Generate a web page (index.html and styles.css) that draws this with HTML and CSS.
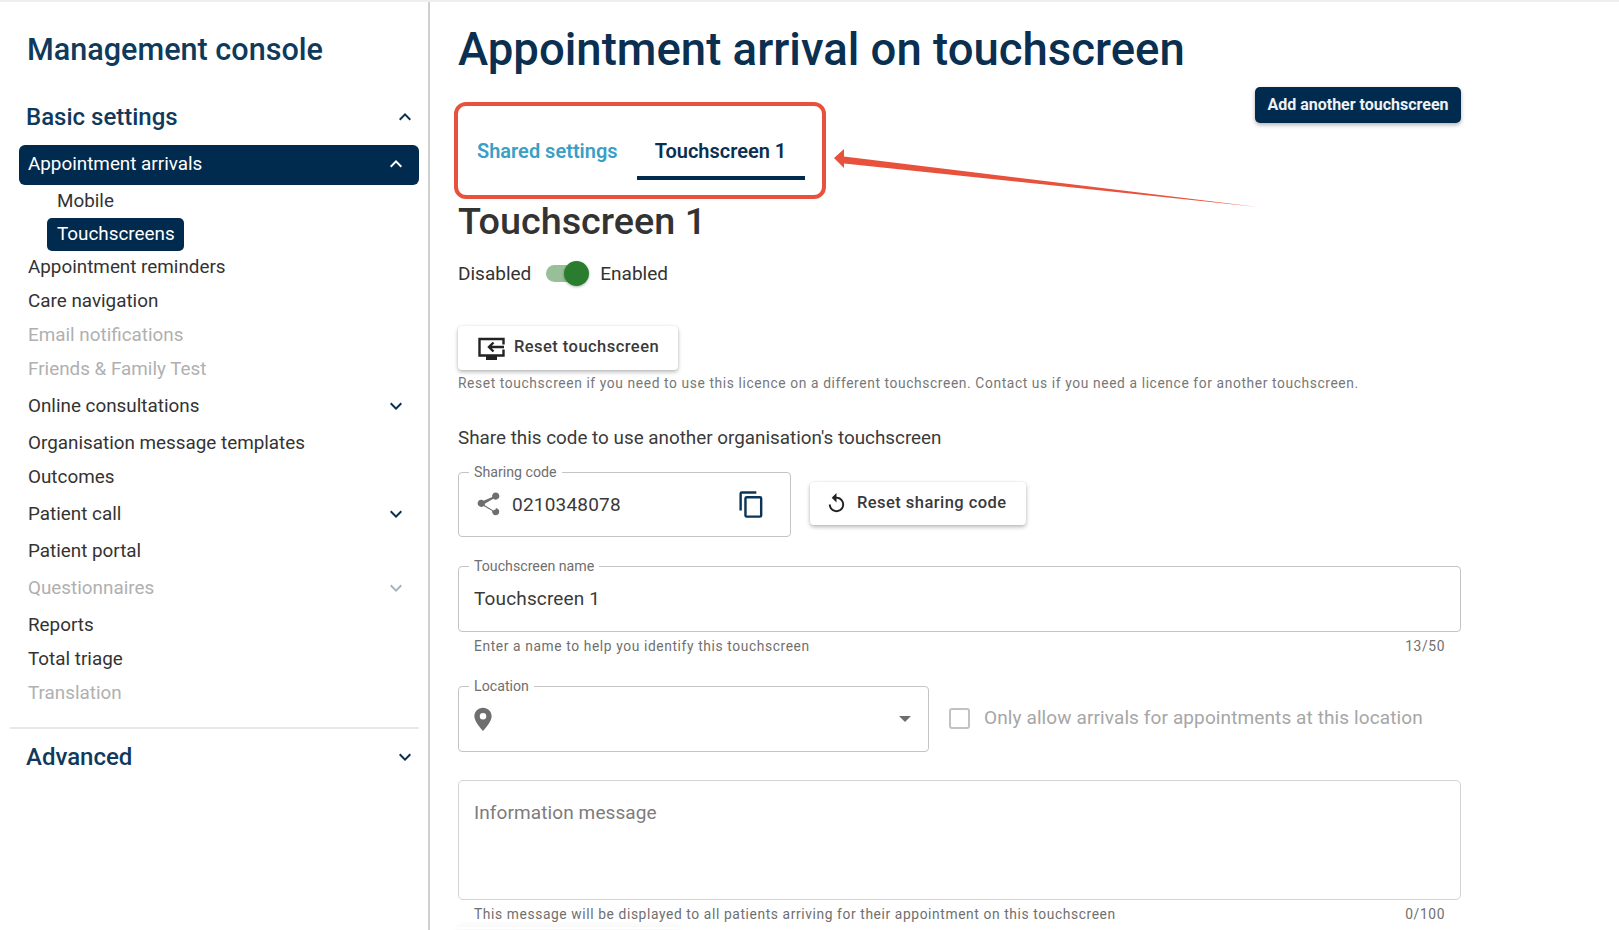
FILE: index.html
```html
<!DOCTYPE html>
<html lang="en">
<head>
    <meta charset="UTF-8">
    <title>Appointment arrival on touchscreen</title>
    <link rel="stylesheet" href="styles.css">
</head>
<body>
    <div class="page">
        <!-- Sidebar -->
        <aside class="sidebar">
            <h2 class="console-title">Management console</h2>

            <div class="section-head first">
                <span>Basic settings</span>
                <svg class="chev" viewBox="0 0 24 24"><path d="M7.4 15.4 12 10.8l4.6 4.6L18 14l-6-6-6 6z"/></svg>
            </div>

            <div class="nav-active">
                <span>Appointment arrivals</span>
                <svg class="chev white" viewBox="0 0 24 24"><path d="M7.4 15.4 12 10.8l4.6 4.6L18 14l-6-6-6 6z"/></svg>
            </div>
            <div class="sub-item">Mobile</div>
            <div class="sub-item selected">Touchscreens</div>

            <div class="nav-item">Appointment reminders</div>
            <div class="nav-item">Care navigation</div>
            <div class="nav-item muted">Email notifications</div>
            <div class="nav-item muted">Friends &amp; Family Test</div>
            <div class="nav-item tall">
                <span>Online consultations</span>
                <svg class="chev" viewBox="0 0 24 24"><path d="M7.4 8.6 12 13.2l4.6-4.6L18 10l-6 6-6-6z"/></svg>
            </div>
            <div class="nav-item">Organisation message templates</div>
            <div class="nav-item">Outcomes</div>
            <div class="nav-item tall">
                <span>Patient call</span>
                <svg class="chev" viewBox="0 0 24 24"><path d="M7.4 8.6 12 13.2l4.6-4.6L18 10l-6 6-6-6z"/></svg>
            </div>
            <div class="nav-item">Patient portal</div>
            <div class="nav-item tall muted">
                <span>Questionnaires</span>
                <svg class="chev faded" viewBox="0 0 24 24"><path d="M7.4 8.6 12 13.2l4.6-4.6L18 10l-6 6-6-6z"/></svg>
            </div>
            <div class="nav-item">Reports</div>
            <div class="nav-item">Total triage</div>
            <div class="nav-item muted">Translation</div>

            <hr class="side-divider">

            <div class="section-head">
                <span>Advanced</span>
                <svg class="chev" viewBox="0 0 24 24"><path d="M7.4 8.6 12 13.2l4.6-4.6L18 10l-6 6-6-6z"/></svg>
            </div>
        </aside>

        <!-- Main content -->
        <main class="content">
            <h1>Appointment arrival on touchscreen</h1>

            <div class="tabs-row">
                <div class="tabs">
                    <div class="tab">Shared settings</div>
                    <div class="tab current">Touchscreen 1</div>
                </div>
                <button class="add-btn" type="button">Add another touchscreen</button>
            </div>

            <h3 class="screen-title">Touchscreen 1</h3>

            <div class="toggle-row">
                <span>Disabled</span>
                <span class="switch"><span class="knob"></span></span>
                <span>Enabled</span>
            </div>

            <button class="plain-btn reset-touch" type="button">
                <svg class="tv-icon" viewBox="0 0 27 23">
                    <path d="M25.500 7.500V2H1.500v16.500h24V12.500"/>
                    <path d="M26 10H11M15.500 5.500 11 10l4.500 4.500"/>
                    <path class="stand" d="M8 21h11"/>
                </svg>
                Reset touchscreen
            </button>
            <p class="help-line">Reset touchscreen if you need to use this licence on a different touchscreen. Contact us if you need a licence for another touchscreen.</p>

            <p class="share-label">Share this code to use another organisation's touchscreen</p>

            <div class="share-row">
                <fieldset class="field share-field">
                    <legend>Sharing code</legend>
                    <svg class="share-icon" viewBox="0 0 24 24"><path d="M18 16.100c-.8 0-1.500.3-2 .8l-7.100-4.200c.1-.2.100-.5.100-.7s0-.5-.1-.7L16 7.200c.5.500 1.200.8 2 .8 1.700 0 3-1.300 3-3s-1.300-3-3-3-3 1.300-3 3c0 .2 0 .5.100.7L8 8.800C7.500 8.300 6.800 8 6 8c-1.700 0-3 1.300-3 3s1.300 3 3 3c.8 0 1.500-.3 2-.8l7.100 4.200c-.1.200-.1.400-.1.600 0 1.600 1.300 2.900 2.900 2.900s3-1.200 3-2.900-1.200-2.900-2.900-2.900z"/></svg>
                    <span class="code-value">0210348078</span>
                    <svg class="copy-icon" viewBox="0 0 24 24"><path d="M16 1H4a2 2 0 0 0-2 2v14h2V3h12zm3 4H8a2 2 0 0 0-2 2v14a2 2 0 0 0 2 2h11a2 2 0 0 0 2-2V7a2 2 0 0 0-2-2zm0 16H8V7h11z"/></svg>
                </fieldset>
                <button class="plain-btn reset-code" type="button">
                    <svg class="btn-icon" viewBox="0 0 24 24"><path d="M12 5V1L7 6l5 5V7c3.300 0 6 2.700 6 6s-2.700 6-6 6-6-2.700-6-6H4c0 4.400 3.600 8 8 8s8-3.600 8-8-3.600-8-8-8z"/></svg>
                    Reset sharing code
                </button>
            </div>

            <fieldset class="field name-field">
                <legend>Touchscreen name</legend>
                <span class="field-value">Touchscreen 1</span>
            </fieldset>
            <div class="helper"><span>Enter a name to help you identify this touchscreen</span><span>13/50</span></div>

            <div class="location-row">
                <fieldset class="field location-field">
                    <legend>Location</legend>
                    <svg class="pin-icon" viewBox="0 0 24 24"><path d="M12 1.500C7.600 1.500 4 5.100 4 9.500c0 5.600 8 13.500 8 13.500s8-7.900 8-13.500c0-4.400-3.600-8-8-8zm0 11a3 3 0 1 1 0-6 3 3 0 0 1 0 6z"/></svg>
                    <span class="caret"></span>
                </fieldset>
                <span class="checkbox"></span>
                <span class="check-label">Only allow arrivals for appointments at this location</span>
            </div>

            <div class="message-box">Information message</div>
            <div class="helper"><span>This message will be displayed to all patients arriving for their appointment on this touchscreen</span><span>0/100</span></div>
            <div class="next-btn"></div>

            <!-- Annotation arrow over the tabs -->
            <svg class="arrow" viewBox="0 0 440 70"><path d="M1 13 11 4 11 11.500 425 62 11 18.500 11 23Z"/></svg>
        </main>
    </div>
</body>
</html>
```

FILE: styles.css
```css
* {
    box-sizing: border-box;
}

html, body {
    margin: 0;
    padding: 0;
    height: 100%;
    overflow: hidden;
    background: #fff;
}

body {
    font-family: Roboto, sans-serif;
    color: #333;
}

.page {
    display: flex;
    height: 930px;
    overflow: hidden;
    border-top: 2px solid #eeeeee;
}

/* Sidebar */
.sidebar {
    width: 430px;
    flex-shrink: 0;
    border-right: 2px solid #d0d0d0;
    padding: 0 9px 0 0;
}

.console-title {
    margin: 28px 0 -1px 27px;
    font-size: 30.600px;
    line-height: 40px;
    font-weight: 500;
    color: #0f3a5c;
}

.section-head {
    display: flex;
    justify-content: space-between;
    align-items: center;
    height: 36px;
    padding: 0 2px 0 26px;
    font-size: 24px;
    font-weight: 500;
    color: #0f3a5c;
}

.section-head.first {
    margin: 30px 0 10px;
}

.chev {
    width: 24px;
    height: 24px;
    fill: #0a2f50;
}

.chev.white {
    fill: #fff;
}

.chev.faded {
    fill: #a6b6c4;
}

.nav-active {
    display: flex;
    justify-content: space-between;
    align-items: center;
    height: 40px;
    margin-left: 19px;
    padding: 0 11px 2px 9px;
    border-radius: 6px;
    background: #012b4e;
    color: #fff;
    font-size: 18.850px;
}

.sub-item {
    width: fit-content;
    margin-left: 47px;
    padding: 0 9px 0 10px;
    height: 33px;
    line-height: 33px;
    font-size: 18.850px;
}

.sub-item.selected {
    border-radius: 5px;
    background: #012b4e;
    color: #fff;
}

.nav-item {
    display: flex;
    justify-content: space-between;
    align-items: center;
    height: 34px;
    margin-left: 19px;
    padding: 0 11px 2px 9px;
    font-size: 18.850px;
}

.nav-item.tall {
    height: 40px;
}

.muted {
    color: #b0b0b0;
}

.side-divider {
    height: 2px;
    margin: 16px 0 10px 10px;
    border: 0;
    background: #e8e8e8;
}

/* Main content */
.content {
    position: relative;
    flex: 1;
    padding: 0 158px 0 28px;
}

h1 {
    margin: 19px 0 0;
    font-size: 45.500px;
    line-height: 58px;
    font-weight: 500;
    color: #0a2f50;
    white-space: nowrap;
}

.tabs-row {
    display: flex;
    justify-content: space-between;
    align-items: flex-start;
    margin-top: 21px;
}

.tabs {
    display: flex;
    width: 372px;
    height: 97px;
    margin: 2px 0 0 -4px;
    padding: 21px 0 0 19px;
    border: 4px solid #e8523c;
    border-radius: 12px;
}

.tab {
    padding: 12px 19px 0 0;
    font-size: 20px;
    font-weight: 600;
    color: #3a9fc4;
    white-space: nowrap;
}

.tab.current {
    height: 53px;
    width: 168px;
    padding: 12px 0 0 18px;
    border-bottom: 4px solid #012b4e;
    color: #0a2f50;
}

.add-btn {
    width: 206px;
    height: 36px;
    margin-top: -13px;
    padding: 0 0 2px;
    border: 0;
    border-radius: 5px;
    background: #012b4e;
    color: #eef2f5;
    font-family: Roboto, sans-serif;
    font-size: 16px;
    font-weight: 700;
    box-shadow: 0 2px 4px rgba(0, 0, 0, 0.3);
}

.screen-title {
    margin: 0;
    height: 46px;
    font-size: 37.800px;
    line-height: 44px;
    font-weight: 500;
    color: #333;
}

.toggle-row {
    display: flex;
    align-items: center;
    gap: 13px;
    height: 34px;
    margin-top: 11px;
    font-size: 19px;
}

.switch {
    position: relative;
    width: 42px;
    height: 17px;
    margin: 0 -1px 0 2px;
    border-radius: 9px;
    background: #98bf98;
}

.knob {
    position: absolute;
    top: -4px;
    right: -1px;
    width: 25px;
    height: 25px;
    border-radius: 50%;
    background: #2a7d2e;
    box-shadow: 0 1px 3px rgba(0, 0, 0, 0.3);
}

.plain-btn {
    display: flex;
    align-items: center;
    border: 0;
    border-radius: 4px;
    background: #fff;
    color: #3a3a3a;
    font-family: Roboto, sans-serif;
    font-size: 16.500px;
    font-weight: 500;
    letter-spacing: 0.45px;
    box-shadow: 0 2px 4px rgba(0, 0, 0, 0.28), 0 0 2px rgba(0, 0, 0, 0.08);
}

.reset-touch {
    width: 220px;
    height: 44px;
    margin-top: 36px;
    padding: 0 0 3px 20px;
    gap: 9px;
}

.tv-icon {
    width: 27px;
    height: 23px;
    margin-top: 3px;
    fill: none;
    stroke: #222;
    stroke-width: 2.400;
}

.tv-icon .stand {
    stroke-width: 4;
}

.btn-icon {
    width: 23px;
    height: 23px;
    margin-top: 3px;
    fill: #222;
}

.help-line {
    margin: 5px 0 0;
    height: 17px;
    font-size: 13.800px;
    line-height: 17px;
    letter-spacing: 0.61px;
    color: #777;
    white-space: nowrap;
}

.share-label {
    margin: 34px 0 0;
    font-size: 18.850px;
    line-height: 24px;
    color: #3a3a3a;
}

.share-row {
    display: flex;
    align-items: center;
    gap: 19px;
    margin-top: 14px;
}

.field {
    position: relative;
    display: flex;
    align-items: center;
    margin: 0;
    padding: 0 15px;
    border: 1px solid #c4c4c4;
    border-radius: 4px;
}

.field legend {
    margin-left: -5px;
    padding: 0 5px;
    font-size: 14.200px;
    line-height: 16px;
    color: #6f6f6f;
}

.share-field {
    width: 333px;
    height: 73px;
    padding-bottom: 8px;
}

.share-icon {
    width: 29px;
    height: 29px;
    fill: #6e6e6e;
}

.code-value {
    margin-left: 9px;
    font-size: 19px;
    letter-spacing: 0.2px;
    color: #3a3a3a;
}

.copy-icon {
    width: 29px;
    height: 29px;
    margin-left: auto;
    margin-right: 9px;
    fill: #0a3558;
}

.reset-code {
    width: 216px;
    height: 43px;
    margin-top: 6px;
    padding: 0 0 3px 15px;
    gap: 9px;
}

.name-field {
    height: 74px;
    margin-top: 21px;
    padding-bottom: 8px;
}

.field-value {
    font-size: 19px;
    letter-spacing: 0.15px;
    color: #3a3a3a;
}

.helper {
    display: flex;
    justify-content: space-between;
    height: 17px;
    margin-top: 6px;
    padding: 0 16px;
    font-size: 13.800px;
    line-height: 17px;
    letter-spacing: 0.61px;
    color: #6f6f6f;
}

.location-row {
    display: flex;
    align-items: center;
    margin-top: 23px;
}

.location-field {
    width: 471px;
    height: 74px;
    padding-bottom: 8px;
}

.pin-icon {
    width: 26px;
    height: 26px;
    margin-left: -4px;
    fill: #6e6e6e;
}

.caret {
    margin-left: auto;
    margin-right: 2px;
    border-left: 6px solid transparent;
    border-right: 6px solid transparent;
    border-top: 6px solid #6e6e6e;
}

.checkbox {
    width: 21px;
    height: 21px;
    margin: 6px 0 0 20px;
    border: 2px solid #c2c2c2;
    border-radius: 3px;
}

.check-label {
    margin: 4px 0 0 14px;
    font-size: 19px;
    letter-spacing: 0.11px;
    color: #a6a6a6;
    white-space: nowrap;
}

.message-box {
    height: 120px;
    margin-top: 28px;
    padding: 20px 15px;
    border: 1.500px solid #d4d4d4;
    border-radius: 5px;
    font-size: 19px;
    letter-spacing: 0.1px;
    color: #7c7c7c;
}

/* top edge of the next button, cut off by the window */
.next-btn {
    width: 220px;
    height: 2px;
    margin-top: 4px;
    box-shadow: 0 0 6px rgba(0, 0, 0, 0.12);
}

.arrow {
    position: absolute;
    top: 143px;
    left: 403px;
    width: 440px;
    height: 70px;
    fill: #e8523c;
}
```
